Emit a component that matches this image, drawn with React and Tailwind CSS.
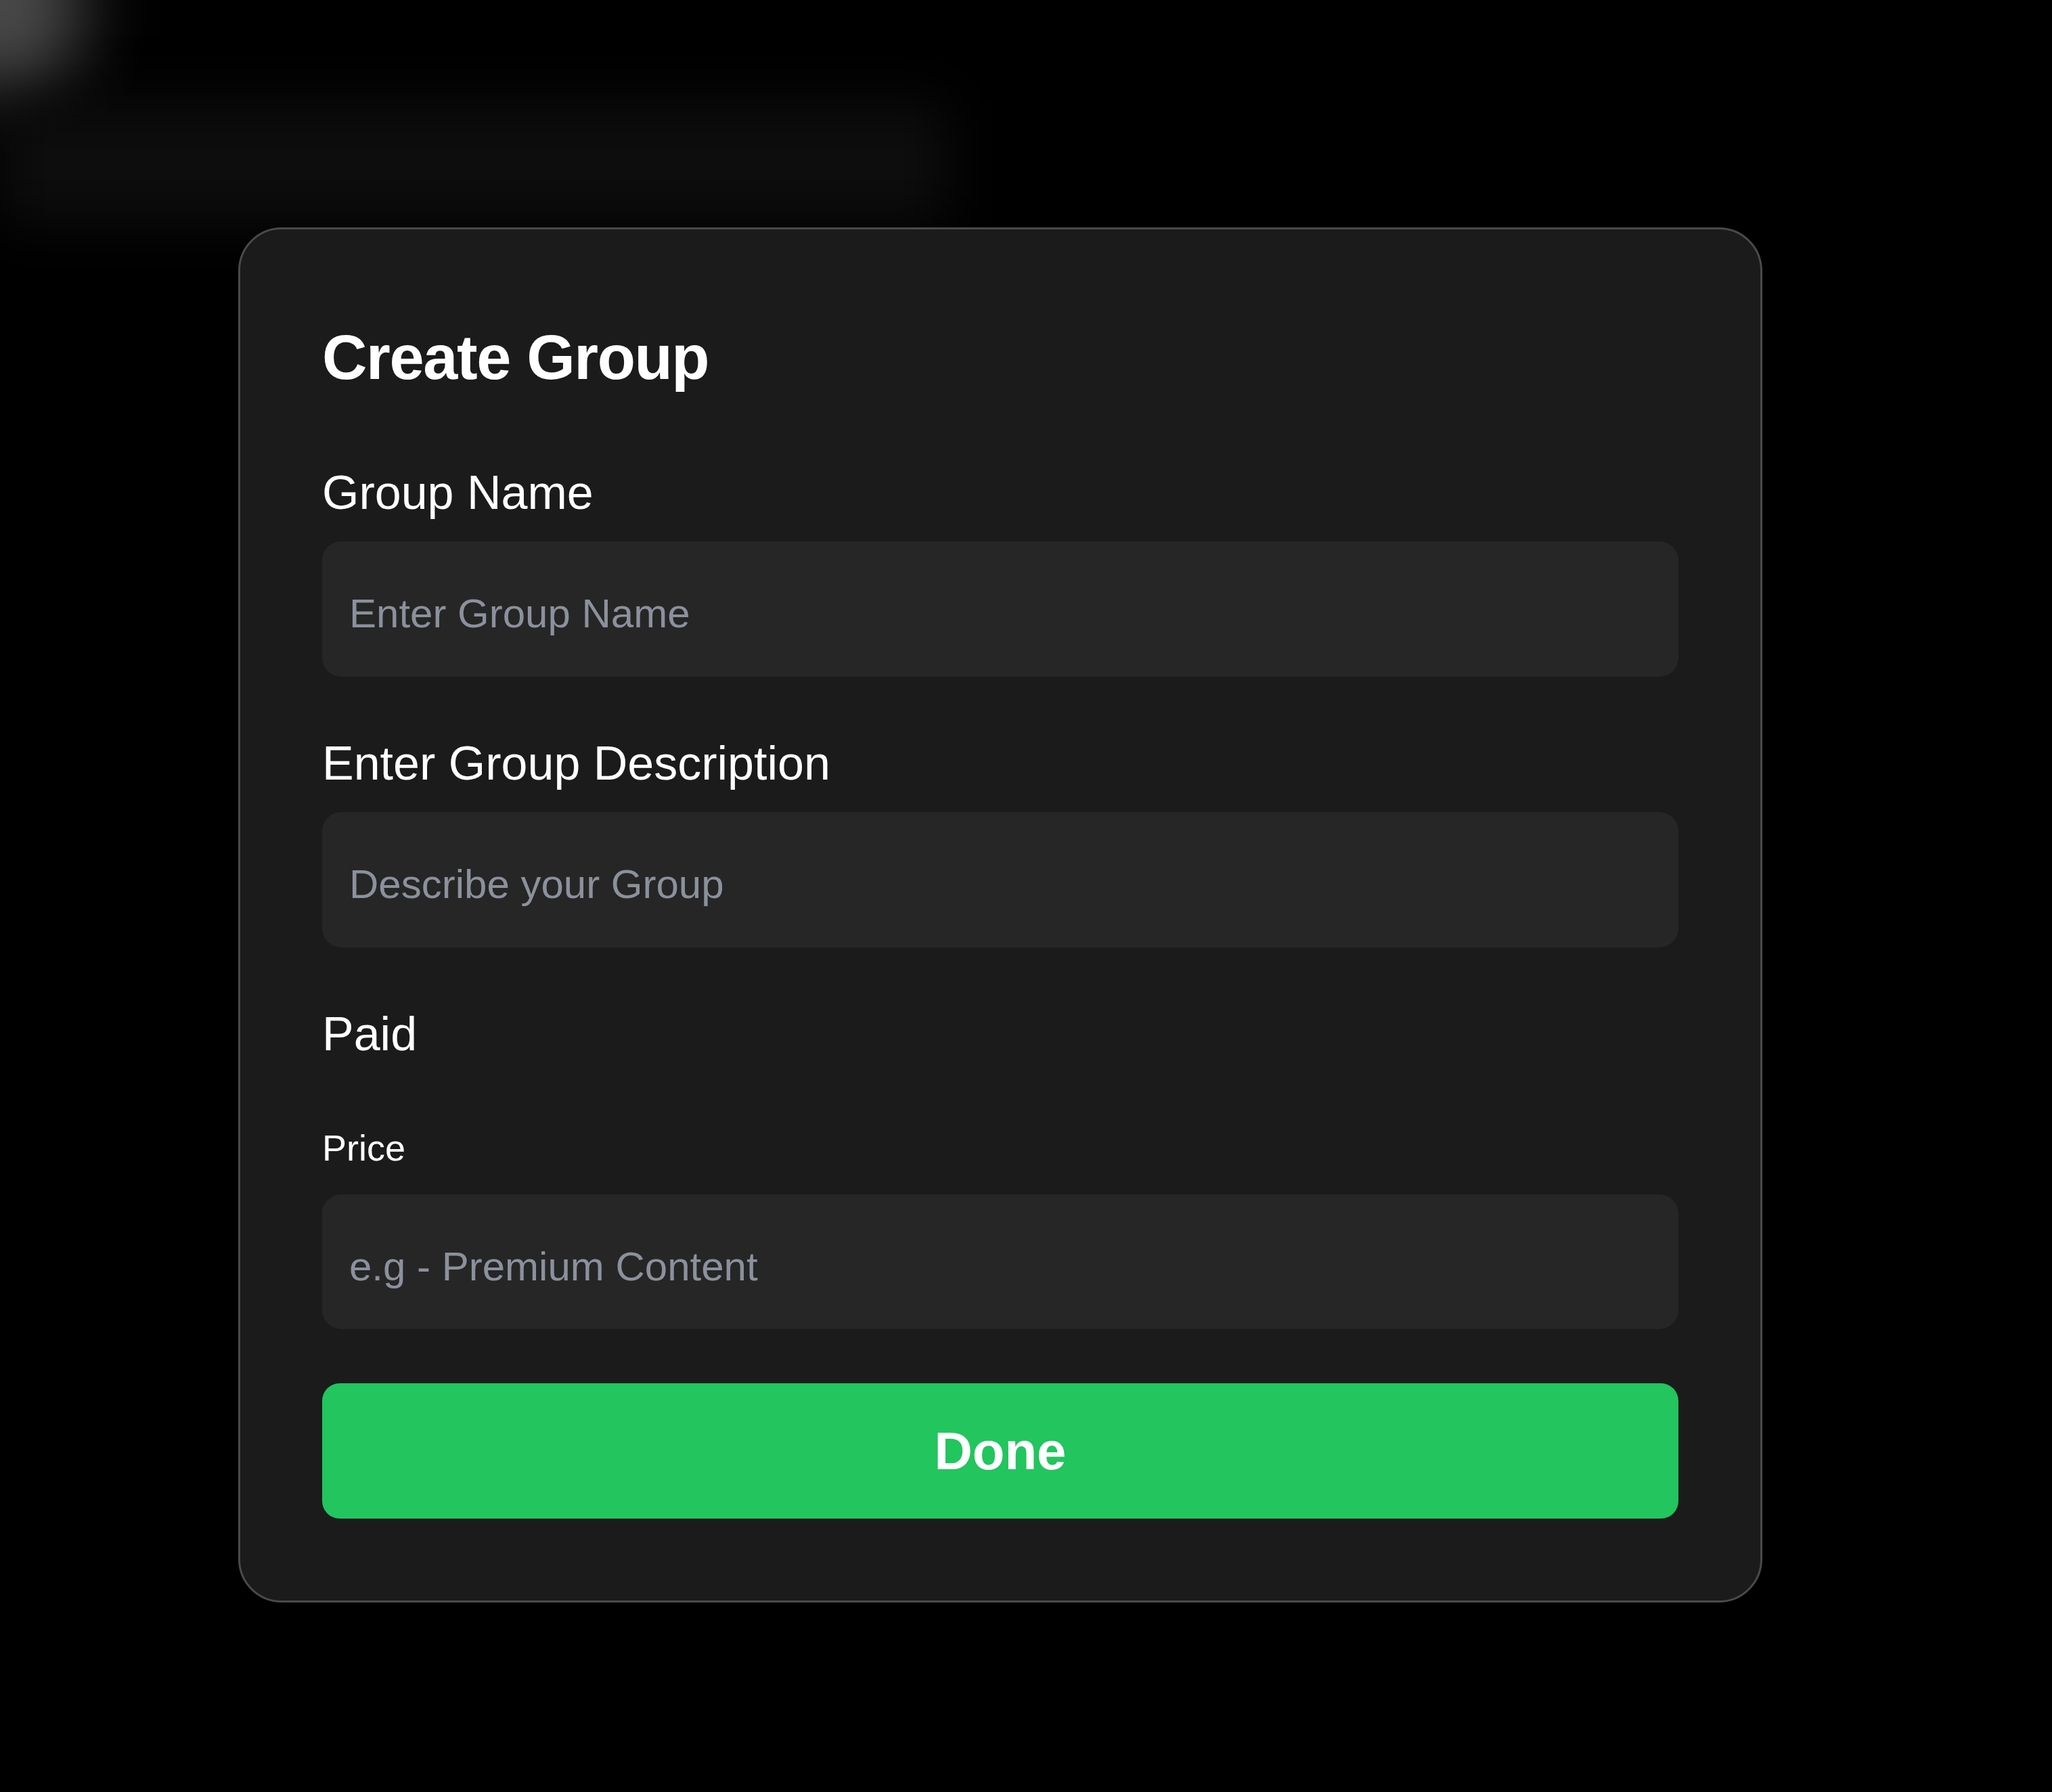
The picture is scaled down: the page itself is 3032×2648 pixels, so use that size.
import { useState } from "react";

const fontStack = "font-['Liberation_Sans',Arial,sans-serif]";

const Field = ({ label, placeholder, value, onChange, labelClass }) => (
	<div className="flex flex-col">
		<label className={labelClass}>{label}</label>
		<input
			type="text"
			value={value}
			onChange={(e) => onChange(e.target.value)}
			placeholder={placeholder}
			className="mt-[27px] h-[200px] w-full rounded-[28px] bg-[#262626] px-[40px] pt-[13px] text-[60px] text-white placeholder:text-[#8b919c] outline-none"
		/>
	</div>
);

const CreateGroupCard = () => {
	const [name, setName] = useState("");
	const [description, setDescription] = useState("");
	const [price, setPrice] = useState("");

	return (
		<div className="relative ml-[352px] mt-[336px] w-[2252px] rounded-[64px] border-[3px] border-[#4a4a4a] bg-[#1b1b1b] px-[121px] pt-[121px] pb-[121px]">
			<h2 className="text-[92px] font-bold leading-[136px] tracking-[-1.4px] text-white">
				Create Group
			</h2>

			<div className="mt-[87px]">
				<Field
					label="Group Name"
					placeholder="Enter Group Name"
					value={name}
					onChange={setName}
					labelClass="text-[70px] leading-[90px] text-white"
				/>
			</div>

			<div className="mt-[83px]">
				<Field
					label="Enter Group Description"
					placeholder="Describe your Group"
					value={description}
					onChange={setDescription}
					labelClass="text-[70px] leading-[90px] text-white"
				/>
			</div>

			{/* paid section */}
			<p className="mt-[83px] text-[70px] leading-[90px] text-white">Paid</p>

			<div className="mt-[88px] flex flex-col">
				<label className="text-[54px] leading-[70px] text-white">Price</label>
				<input
					type="text"
					value={price}
					onChange={(e) => setPrice(e.target.value)}
					placeholder="e.g - Premium Content"
					className="mt-[34px] h-[199px] w-full rounded-[28px] bg-[#262626] px-[40px] pt-[13px] text-[60px] text-white placeholder:text-[#8b919c] outline-none"
				/>
			</div>

			<button
				type="button"
				className="mt-[80px] flex h-[200px] w-full items-center justify-center rounded-[26px] bg-[#22c55e] text-[78px] font-bold text-white"
			>
				Done
			</button>
		</div>
	);
};

export default function App() {
	return (
		<div className={`relative h-[2648px] w-full overflow-hidden bg-black ${fontStack}`}>
			{/* blurred backdrop behind the modal */}
			<div className="pointer-events-none absolute -left-[110px] -top-[120px] h-[260px] w-[230px] rounded-full bg-[#4a4a4a] blur-[55px]" />
			<div className="pointer-events-none absolute left-0 top-[150px] h-[180px] w-[1400px] bg-[#0d0d0d] blur-[40px]" />
			<CreateGroupCard />
		</div>
	);
}
